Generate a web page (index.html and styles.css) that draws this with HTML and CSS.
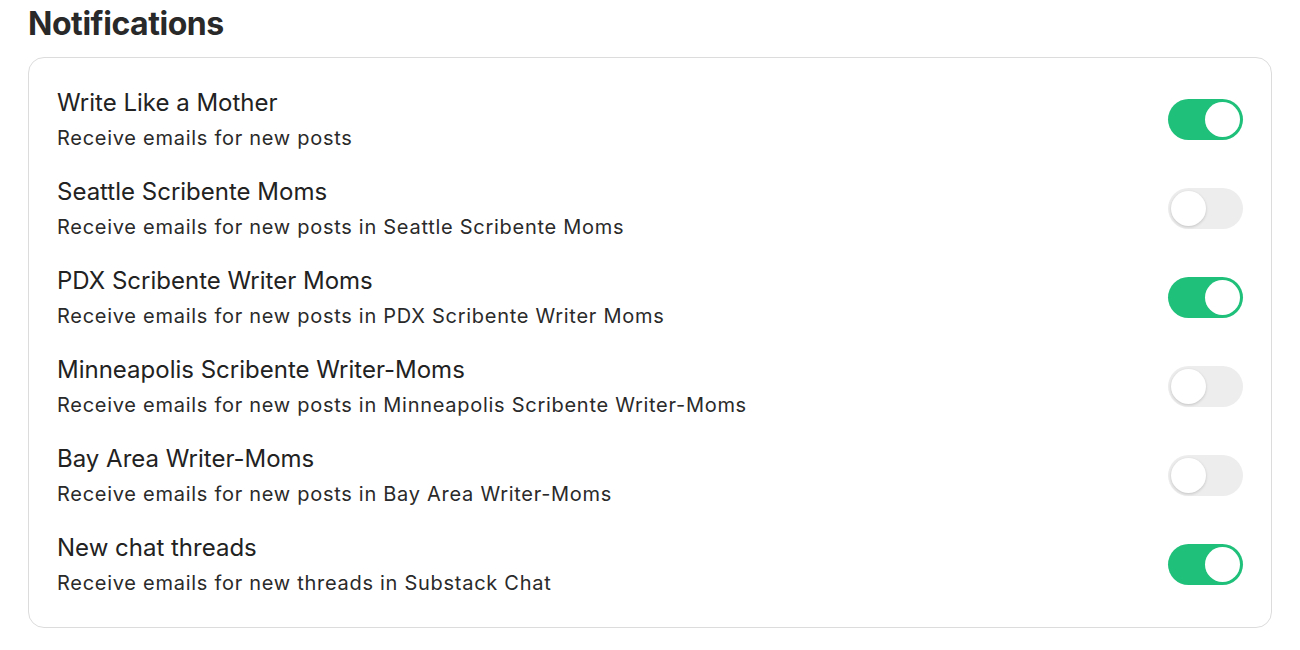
FILE: index.html
```html
<!DOCTYPE html>
<html>
<head>
<meta charset="utf-8">
<link rel="stylesheet" href="styles.css">
</head>
<body>
<div class="page">
  <h1 class="heading">Notifications</h1>
  <div class="card">
    <div class="row">
      <div class="text">
        <div class="title">Write Like a Mother</div>
        <div class="sub">Receive emails for new posts</div>
      </div>
      <div class="toggle on"><div class="knob"></div></div>
    </div>
    <div class="row">
      <div class="text">
        <div class="title">Seattle Scribente Moms</div>
        <div class="sub">Receive emails for new posts in Seattle Scribente Moms</div>
      </div>
      <div class="toggle"><div class="knob"></div></div>
    </div>
    <div class="row">
      <div class="text">
        <div class="title">PDX Scribente Writer Moms</div>
        <div class="sub">Receive emails for new posts in PDX Scribente Writer Moms</div>
      </div>
      <div class="toggle on"><div class="knob"></div></div>
    </div>
    <div class="row">
      <div class="text">
        <div class="title">Minneapolis Scribente Writer-Moms</div>
        <div class="sub">Receive emails for new posts in Minneapolis Scribente Writer-Moms</div>
      </div>
      <div class="toggle"><div class="knob"></div></div>
    </div>
    <div class="row">
      <div class="text">
        <div class="title">Bay Area Writer-Moms</div>
        <div class="sub">Receive emails for new posts in Bay Area Writer-Moms</div>
      </div>
      <div class="toggle"><div class="knob"></div></div>
    </div>
    <div class="row">
      <div class="text">
        <div class="title">New chat threads</div>
        <div class="sub">Receive emails for new threads in Substack Chat</div>
      </div>
      <div class="toggle on"><div class="knob"></div></div>
    </div>
  </div>
</div>
</body>
</html>
```
FILE: styles.css
```css
html, body {
  margin: 0;
  padding: 0;
  background: #ffffff;
}
body {
  font-family: Inter, "Noto Sans", sans-serif;
  color: #222222;
}
.page {
  padding: 4px 28px 0 28px;
}
.heading {
  margin: 0;
  font-size: 32px;
  line-height: 40px;
  font-weight: 700;
  color: #292929;
  letter-spacing: -0.45px;
}
.card {
  margin-top: 13px;
  border: 1px solid #dcdcdc;
  border-radius: 16px;
  padding: 30px 28px 31px 28px;
  display: flex;
  flex-direction: column;
  gap: 26px;
}
.row {
  display: flex;
  align-items: center;
  justify-content: space-between;
}
.title {
  font-size: 24px;
  line-height: 30px;
  color: #222222;
}
.sub {
  margin-top: 7px;
  font-size: 20px;
  line-height: 26px;
  color: #2a2a2a;
  letter-spacing: 0.72px;
}
.toggle {
  width: 75px;
  height: 41px;
  border-radius: 21px;
  background: #ededed;
  position: relative;
  flex-shrink: 0;
}
.toggle.on {
  background: #1fc07a;
}
.knob {
  position: absolute;
  top: 3px;
  left: 3px;
  width: 35px;
  height: 35px;
  border-radius: 50%;
  background: #ffffff;
  box-shadow: 0 1px 3px rgba(0,0,0,0.18);
}
.toggle.on .knob {
  left: 37px;
  box-shadow: none;
}
```
